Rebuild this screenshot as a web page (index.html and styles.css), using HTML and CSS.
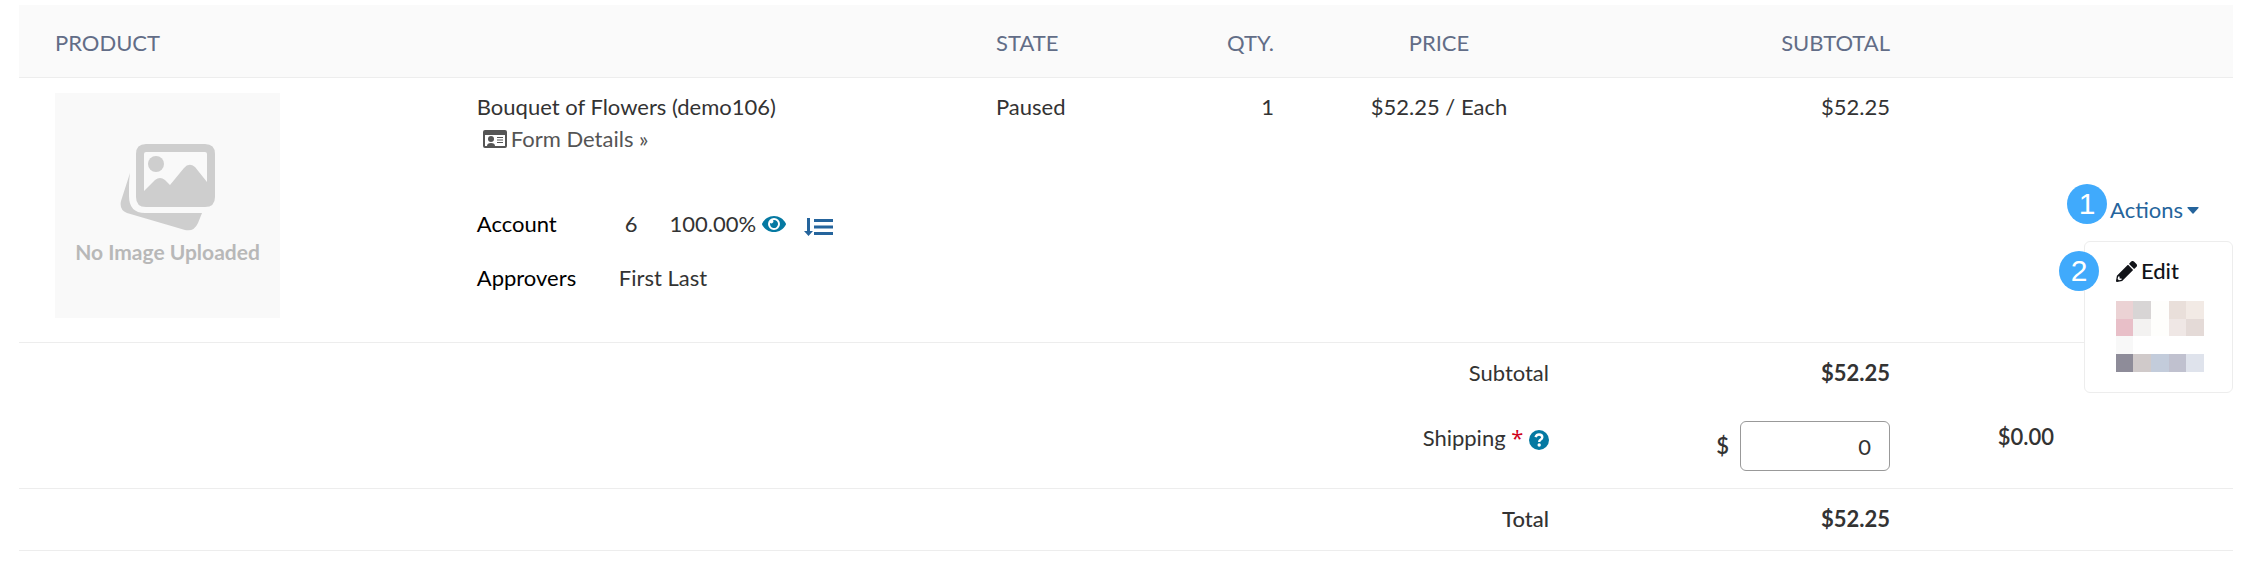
FILE: index.html
```html
<!DOCTYPE html>
<html lang="en">
    <head>
        <meta charset="UTF-8" />
        <meta name="viewport" content="width=device-width, initial-scale=1.0" />
        <title>Order Products</title>
        <link rel="stylesheet" href="styles.css">
    </head>
    <body>
        <table class="order">
            <colgroup>
                <col class="col-product" />
                <col />
                <col class="col-state" />
                <col class="col-qty" />
                <col class="col-price" />
                <col class="col-subtotal" />
                <col class="col-extra" />
                <col class="col-extra" />
            </colgroup>
            <thead>
                <tr>
                    <th class="product" colspan="2">PRODUCT</th>
                    <th>STATE</th>
                    <th class="right">QTY.</th>
                    <th class="price">PRICE</th>
                    <th class="right">SUBTOTAL</th>
                    <th colspan="2"></th>
                </tr>
            </thead>
            <tbody>
                <tr class="item">
                    <td class="product">
                        <div class="thumb">
                            <svg class="thumb-icon" viewBox="0 0 96 88" width="96" height="88">
                                <path d="M10 29 Q9 36 9 42 V52 Q9 69 25 69 H82 L78 79 Q74 88 65 86 L7 69 Q-1 66 1 57 Z" fill="#cecece" />
                                <path fill-rule="evenodd" fill="#cecece" d="M26 0 H85 Q95 0 95 10 V53 Q95 63 85 63 H26 Q16 63 16 53 V10 Q16 0 26 0 Z M26 8 Q24 8 24 10 V47 L35 36 Q40 32 45 36 L50 41 L64 24 Q69 18 75 23 L87 38 V10 Q87 8 85 8 Z" />
                                <circle cx="36" cy="20" r="8" fill="#cecece" />
                            </svg>
                            <span>No Image Uploaded</span>
                        </div>
                    </td>
                    <td>
                        <div>Bouquet of Flowers (demo106)</div>
                        <a class="form-link" href="#">
                            <svg viewBox="0 0 24 18" width="24" height="18">
                                <path fill="#555" fill-rule="evenodd" d="M2 0 H22 Q24 0 24 2 V16 Q24 18 22 18 H2 Q0 18 0 16 V2 Q0 0 2 0 Z M2 5 V16 H4 Q4 13 8 13 Q12 13 12 16 H22 V5 Z" />
                                <circle cx="8" cy="9" r="3" fill="#555" />
                                <path d="M14 7.500 H20 M14 10 H20 M14 12.500 H20" stroke="#555" stroke-width="1.200" />
                            </svg>
                            Form Details »
                        </a>
                        <dl class="meta">
                            <dt>Account</dt>
                            <dd class="account">
                                <span>6</span>
                                <span class="percent">100.00%</span>
                                <a href="#" aria-label="View account">
                                    <svg viewBox="0 0 576 384" width="24" height="16">
                                        <path fill="#0579a2" d="M572 177C518 72 411 0 288 0S58 72 4 177a32 32 0 0 0 0 30C58 312 165 384 288 384s230-72 284-177a32 32 0 0 0 0-30zM288 336a144 144 0 1 1 144-144 144 144 0 0 1-144 144zm0-240a95 95 0 0 0-25 4 48 48 0 0 1-67 67A96 96 0 1 0 288 96z" />
                                    </svg>
                                </a>
                                <a class="sort" href="#" aria-label="Split accounts">
                                    <svg viewBox="0 0 29 18" width="29" height="18">
                                        <path fill="#25649c" d="M3 0 H6 V13 H9 L4.500 18 L0 13 H3 Z M10 1 H29 V4 H10 Z M10 7.500 H29 V10.500 H10 Z M10 14 H29 V17 H10 Z" />
                                    </svg>
                                </a>
                            </dd>
                            <dt>Approvers</dt>
                            <dd>First Last</dd>
                        </dl>
                    </td>
                    <td>Paused</td>
                    <td class="right">1</td>
                    <td class="price">$52.25 / Each</td>
                    <td class="right">$52.25</td>
                    <td colspan="2" class="actions">
                        <div class="dropdown">
                            <span class="badge badge-actions">1</span>
                            <button class="toggle" type="button">
                                Actions
                                <svg viewBox="0 0 12 7" width="12" height="7">
                                    <path fill="#25649c" d="M1 0 H11 Q12 0 11.500 1 L6.500 6.500 Q6 7 5.500 6.500 L0.500 1 Q0 0 1 0 Z" />
                                </svg>
                            </button>
                            <div class="menu">
                                <span class="badge badge-edit">2</span>
                                <button class="menu-item" type="button">
                                    <svg viewBox="0 0 512 512" width="21" height="21">
                                        <path fill="#111318" d="M498 142l-46 46c-5 5-13 5-17 0L324 77c-5-5-5-12 0-17l46-46c19-19 49-19 68 0l60 60c19 19 19 49 0 68zm-214-42L22 362 0 484c-3 16 12 30 28 28l122-22 262-262c5-5 5-13 0-17L301 100c-4-5-12-5-17 0zM88 424h48v36l-64 12-32-32 12-64h36v48z" />
                                    </svg>
                                    Edit
                                </button>
                                <svg class="redacted" viewBox="0 0 88 71" width="88" height="71">
                                    <path fill="#ebd2d4" d="M0 0h17v18H0z" />
                                    <path fill="#d8d5d5" d="M17 0h18v18H17z" />
                                    <path fill="#fefefc" d="M35 0h18v35H35z" />
                                    <path fill="#e9dfda" d="M53 0h17v18H53z" />
                                    <path fill="#f2eae5" d="M70 0h18v18H70z" />
                                    <path fill="#e8bfc8" d="M0 18h17v17H0z" />
                                    <path fill="#f3f2f1" d="M17 18h18v17H17z" />
                                    <path fill="#efe7e5" d="M53 18h17v17H53z" />
                                    <path fill="#e4dad7" d="M70 18h18v17H70z" />
                                    <path fill="#f8f8f8" d="M0 35h17v18H0z" />
                                    <path fill="#8e8c99" d="M0 53h17v18H0z" />
                                    <path fill="#d0caca" d="M17 53h18v18H17z" />
                                    <path fill="#c3ccdb" d="M35 53h18v18H35z" />
                                    <path fill="#c0c1cf" d="M53 53h17v18H53z" />
                                    <path fill="#dfe3ec" d="M70 53h18v18H70z" />
                                </svg>
                            </div>
                        </div>
                    </td>
                </tr>
                <tr class="subtotal">
                    <td class="right" colspan="5">Subtotal</td>
                    <td class="right amount">$52.25</td>
                    <td colspan="2"></td>
                </tr>
                <tr class="shipping">
                    <td class="right" colspan="5">
                        <label for="shipping">Shipping <span class="required">*</span></label>
                        <svg class="help" viewBox="0 0 20 20" width="20" height="20">
                            <circle cx="10" cy="10" r="10" fill="#0579a2" />
                            <path d="M6.500 7.200 Q7.500 4.500 10 4.500 Q13.300 4.500 13.300 7.200 Q13.300 8.700 11.500 9.700 Q10.200 10.400 10.200 12" fill="none" stroke="#fff" stroke-width="2.400" />
                            <circle cx="10.200" cy="15" r="1.700" fill="#fff" />
                        </svg>
                    </td>
                    <td>
                        <div class="money">
                            <span>$</span>
                            <input id="shipping" type="text" value="0" />
                        </div>
                    </td>
                    <td class="right amount-small">$0.00</td>
                    <td></td>
                </tr>
                <tr class="total">
                    <td class="right total-label" colspan="5">Total</td>
                    <td class="right amount">$52.25</td>
                    <td colspan="2"></td>
                </tr>
            </tbody>
        </table>
    </body>
</html>
```
FILE: styles.css
```css
* {
    box-sizing: border-box;
}

body {
    margin: 5px 26px 0 19px;
    font-family: Lato, "Open Sans", sans-serif;
    font-size: 22px;
    line-height: 32px;
    color: #333;
    background-color: #fff;
}

button,
input {
    font: inherit;
}

a {
    color: #555;
    text-decoration: none;
}

svg {
    flex-shrink: 0;
}

.order {
    width: 100%;
    table-layout: fixed;
    border-collapse: separate;
    border-spacing: 0;
}

.col-product {
    width: 20%;
}

.col-state {
    width: 180px;
}

.col-qty {
    width: 128px;
}

.col-price {
    width: 275px;
}

.col-subtotal {
    width: 341px;
}

.col-extra {
    width: 164px;
}

th,
td {
    padding: 14px 15px;
    text-align: left;
    vertical-align: top;
}

th {
    padding-top: 22px;
    padding-bottom: 18px;
    font-weight: 400;
    color: #626d87;
    background-color: #fafafa;
}

th,
.item td,
.shipping td,
.total td {
    border-bottom: 1px solid #ededed;
}

.product {
    padding-left: 36px;
}

.right {
    text-align: right;
}

.price {
    padding-left: 40px;
    text-align: center;
}

.item td {
    padding-top: 13px;
}

.item .product {
    padding-top: 15px;
    padding-bottom: 24px;
}

/* product image placeholder */
.thumb {
    display: flex;
    flex-direction: column;
    align-items: center;
    gap: 6px;
    width: 225px;
    height: 225px;
    padding-top: 51px;
    background-color: #f9f9f9;
    color: #b8b8b8;
    font-size: 21px;
    line-height: 28px;
    font-weight: 700;
}

.form-link {
    display: flex;
    align-items: center;
    gap: 4px;
    padding-left: 6px;
}

.meta {
    display: grid;
    grid-template-columns: 142px auto;
    row-gap: 22px;
    margin: 53px 0 0;
}

.meta dt {
    color: #000;
}

.meta dd {
    margin: 0;
}

.account {
    display: flex;
    align-items: center;
    padding-left: 6px;
}

.account a {
    display: flex;
    margin-left: 6px;
}

.percent {
    margin-left: 32px;
}

.account .sort {
    margin-left: 18px;
    padding-top: 6px;
}

.item .actions {
    padding: 0;
    vertical-align: middle;
}

.dropdown {
    position: relative;
    display: flex;
    justify-content: flex-end;
    padding-right: 34px;
}

.toggle,
.menu-item {
    display: flex;
    align-items: center;
    gap: 4px;
    padding: 0;
    border: 0;
    background: none;
    color: #25649c;
    cursor: pointer;
}

.menu {
    position: absolute;
    top: 47px;
    right: 0;
    width: 149px;
    padding: 13px 28px 20px 31px;
    border: 1px solid #ededed;
    border-radius: 6px;
    background-color: #fff;
}

.menu-item {
    color: #111318;
    font-weight: 500;
}

.redacted {
    display: block;
    margin-top: 14px;
}

.badge {
    position: absolute;
    width: 40px;
    height: 40px;
    border-radius: 50%;
    background-color: #40aafc;
    color: #fff;
    font-family: "Liberation Sans", sans-serif;
    font-size: 30px;
    line-height: 40px;
    text-align: center;
}

.badge-actions {
    top: -10px;
    right: 126px;
}

.badge-edit {
    top: 9px;
    left: -26px;
}

.subtotal td {
    padding-bottom: 18px;
}

.amount {
    font-weight: 700;
}

.amount-small {
    font-weight: 600;
}

.total-label {
    font-weight: 500;
}

.required {
    color: #d0021b;
    font-family: "Open Sans", sans-serif;
}

.help {
    vertical-align: -4px;
}

.shipping td {
    padding-bottom: 17px;
}

.money {
    display: flex;
    justify-content: flex-end;
    align-items: center;
    gap: 11px;
    font-weight: 600;
}

.money input {
    width: 150px;
    height: 50px;
    padding: 0 18px;
    border: 1px solid #999;
    border-radius: 6px;
    color: #333;
    font-weight: 400;
    text-align: right;
}

.total td {
    padding-bottom: 15px;
}
```
